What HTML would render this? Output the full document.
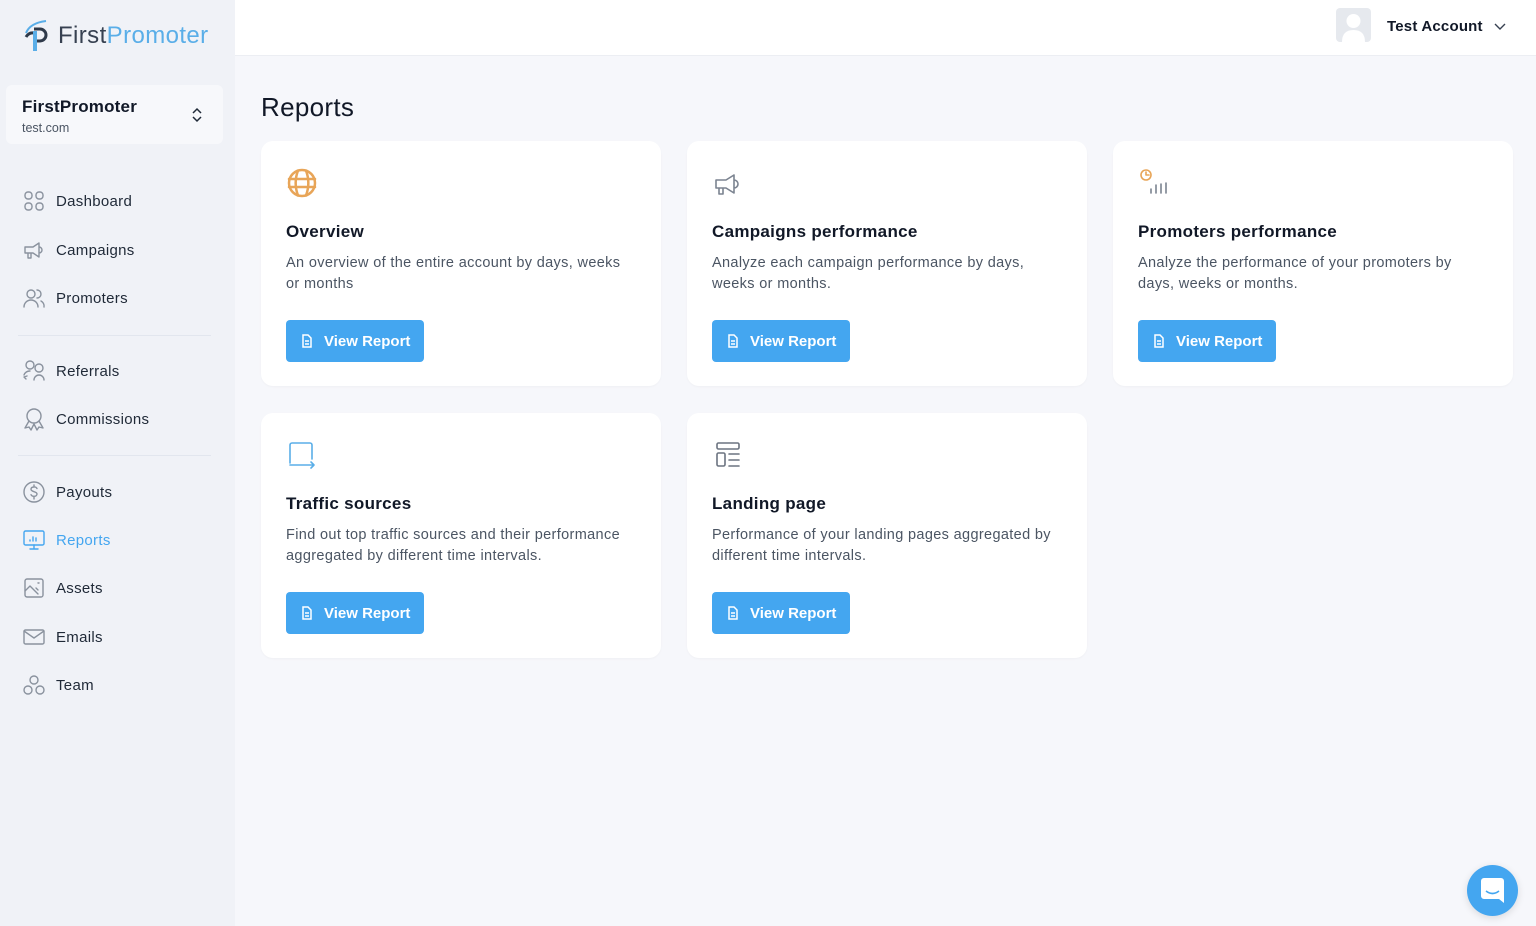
<!DOCTYPE html>
<html><head><meta charset="utf-8"><style>
*{box-sizing:border-box;margin:0;padding:0}
body{width:1536px;height:926px;overflow:hidden;font-family:"Liberation Sans",sans-serif;background:#f6f7fb;position:relative;color:#111827}
.side{position:absolute;left:0;top:0;width:235px;height:926px;background:#f0f2f7}
.logo{position:absolute;left:22px;top:19px;display:flex;align-items:center}
.logo span{font-size:24px;letter-spacing:.4px}
.acct{position:absolute;left:6px;top:85px;width:217px;height:59px;background:#f7f8fb;border-radius:6px}
.acct b{position:absolute;left:16px;top:12px;font-size:17px;letter-spacing:.2px}
.acct i{position:absolute;left:16px;top:36px;font-size:12.5px;font-style:normal;color:#4b5563}
.nav{position:absolute;left:22px;display:flex;align-items:center;font-size:15px;color:#1f2937;letter-spacing:.3px}
.nav svg{width:24px;height:24px;margin-right:10px;fill:none;stroke:#8a929e;stroke-width:1.4;stroke-linecap:round;stroke-linejoin:round}
.sep{position:absolute;left:18px;width:193px;height:1px;background:#e2e6ee}
.top{position:absolute;left:235px;top:0;right:0;height:56px;background:#fff;border-bottom:1px solid #eceef3}
h1{position:absolute;left:261px;top:92px;font-size:26px;font-weight:normal;color:#111827;letter-spacing:.3px}
.card{position:absolute;width:400px;height:245px;background:#fff;border-radius:12px;box-shadow:0 1px 2px rgba(0,0,0,.03)}
.card svg.ic{position:absolute;left:25px;top:26px;width:32px;height:32px;fill:none;stroke-width:1.6;stroke-linecap:round;stroke-linejoin:round}
.card h3{position:absolute;left:25px;top:81px;font-size:17px;font-weight:bold;letter-spacing:.3px}
.card p{position:absolute;left:25px;top:112px;width:350px;font-size:14.5px;line-height:21px;color:#4b5563;letter-spacing:.35px}
.btn{position:absolute;left:25px;top:179px;width:138px;height:42px;background:#44a6f0;border-radius:4px;color:#fff;font-weight:bold;font-size:15px;display:flex;align-items:center;padding-left:14px}
.btn svg{width:14px;height:14px;margin-right:10px;fill:none;stroke:#fff;stroke-width:1.5}
</style></head><body>
<div class="side">
 <div class="logo">
  <svg width="32" height="34" viewBox="0 0 32 34"><path d="M4 14 Q8 4 24 2" stroke="#5aaee8" stroke-width="2" fill="none"/><path d="M12 10h6a6 6 0 0 1 0 12h-4" stroke="#2f3a4a" stroke-width="3" fill="none"/><path d="M4 18q3-5 8-4" stroke="#2f3a4a" stroke-width="3" fill="none"/><path d="M13 12v20" stroke="#5aaee8" stroke-width="4"/></svg>
  <span style="color:#374151;margin-left:4px">First</span><span style="color:#5aaee8">Promoter</span>
 </div>
 <div class="acct"><b>FirstPromoter</b><i>test.com</i>
  <svg style="position:absolute;left:185px;top:22px" width="12" height="16" viewBox="0 0 12 16" fill="none" stroke="#1f2937" stroke-width="1.5"><path d="M2 6l4-4 4 4M2 10l4 4 4-4"/></svg></div>
 <div class="nav" style="top:189px"><svg viewBox="0 0 24 24"><rect x="3" y="3" width="7" height="7" rx="3"/><rect x="14" y="3" width="7" height="7" rx="3"/><rect x="3" y="14" width="7" height="7" rx="3"/><rect x="14" y="14" width="7" height="7" rx="3"/></svg>Dashboard</div>
 <div class="nav" style="top:238px"><svg viewBox="0 0 24 24"><path d="M3 9h8l6-4v14l-6-4H3zM6 15v5h3v-5M17 9a3 3 0 0 1 0 6"/></svg>Campaigns</div>
 <div class="nav" style="top:286px"><svg viewBox="0 0 24 24"><circle cx="9" cy="8" r="4"/><path d="M2 21a7 7 0 0 1 14 0M15 4a4 4 0 0 1 0 8M19 15a6 6 0 0 1 3 6"/></svg>Promoters</div>
 <div class="sep" style="top:335px"></div>
 <div class="nav" style="top:359px"><svg viewBox="0 0 24 24"><circle cx="8" cy="6" r="4"/><circle cx="17" cy="9" r="4"/><path d="M12 21a5 5 0 0 1 10 0M2 16a6 6 0 0 1 6-4M4 20l-2-2 3-1"/></svg>Referrals</div>
 <div class="nav" style="top:407px"><svg viewBox="0 0 24 24"><circle cx="12" cy="9" r="7"/><path d="M7 14l-4 7 4-1 2 3 3-6 3 6 2-3 4 1-4-7"/></svg>Commissions</div>
 <div class="sep" style="top:455px"></div>
 <div class="nav" style="top:480px"><svg viewBox="0 0 24 24"><circle cx="12" cy="12" r="10"/><path d="M15 8.5a3 3 0 0 0-3-1.5c-2 0-3 1-3 2.3 0 3 6 1.7 6 4.7 0 1.300-1.2 2.3-3 2.3a3.2 3.2 0 0 1-3-1.6M12 5v2M12 17v2"/></svg>Payouts</div>
 <div class="nav" style="top:528px;color:#44a6f0"><svg viewBox="0 0 24 24" style="stroke:#44a6f0"><rect x="2" y="3" width="20" height="14" rx="1.5"/><path d="M8 21h8M12 17v4M8 12v1M11 9v4M14 10v3"/></svg>Reports</div>
 <div class="nav" style="top:576px"><svg viewBox="0 0 24 24"><rect x="3" y="3" width="18" height="18" rx="2"/><path d="M3 15l5-5 8 8M14 12l2 2M16 7h1"/></svg>Assets</div>
 <div class="nav" style="top:625px"><svg viewBox="0 0 24 24"><rect x="2" y="5" width="20" height="14" rx="1.5"/><path d="M2 6l10 7 10-7"/></svg>Emails</div>
 <div class="nav" style="top:673px"><svg viewBox="0 0 24 24"><circle cx="12" cy="7" r="4"/><circle cx="6" cy="17" r="4"/><circle cx="18" cy="17" r="4"/></svg>Team</div>
</div>
<div class="top">
 <svg style="position:absolute;left:1101px;top:8px" width="35" height="34" viewBox="0 0 35 34"><rect width="35" height="34" rx="4" fill="#e6e9ee"/><circle cx="17.5" cy="13" r="7" fill="#fff"/><path d="M6 34q0-12 11.5-12T29 34z" fill="#fff"/></svg>
 <div style="position:absolute;left:1152px;top:18px;font-size:15px;font-weight:bold;color:#111827;letter-spacing:.2px">Test Account</div>
 <svg style="position:absolute;left:1259px;top:21px" width="12" height="10" viewBox="0 0 12 10" fill="none" stroke="#374151" stroke-width="1.4"><path d="M1 3l5 5 5-5"/></svg>
</div>
<h1>Reports</h1>
<div class="card" style="left:261px;top:141px"><svg class="ic" viewBox="0 0 32 32" stroke="#e8a558"><circle cx="16" cy="16" r="13" stroke-width="2.5"/><path d="M3 12h26M3 20h26M12 3.5c-3 8-3 17 0 25M20 3.5c3 8 3 17 0 25" stroke-width="2.5"/></svg>
 <h3>Overview</h3><p>An overview of the entire account by days, weeks or months</p><div class="btn"><svg viewBox="0 0 14 14"><path d="M3 1h5l3 3v9H3zM5 7h4M5 10h4"/></svg>View Report</div></div>
<div class="card" style="left:687px;top:141px"><svg class="ic" viewBox="0 0 32 32" stroke="#7b8390"><path d="M4 13h10l8-5v18l-8-5H4zM7 21v6h4v-6M22 13a4 4 0 0 1 0 8"/></svg>
 <h3>Campaigns performance</h3><p>Analyze each campaign performance by days, weeks or months.</p><div class="btn"><svg viewBox="0 0 14 14"><path d="M3 1h5l3 3v9H3zM5 7h4M5 10h4"/></svg>View Report</div></div>
<div class="card" style="left:1113px;top:141px"><svg class="ic" viewBox="0 0 32 32" stroke="#7b8390"><circle cx="8" cy="8" r="5" stroke="#e8a558"/><path d="M8 5v3h3" stroke="#e8a558"/><path d="M13 26v-4M18 26v-8M23 26v-9M28 26v-10"/></svg>
 <h3>Promoters performance</h3><p>Analyze the performance of your promoters by days, weeks or months.</p><div class="btn"><svg viewBox="0 0 14 14"><path d="M3 1h5l3 3v9H3zM5 7h4M5 10h4"/></svg>View Report</div></div>
<div class="card" style="left:261px;top:413px"><svg class="ic" viewBox="0 0 32 32" stroke="#5aaee8"><path d="M4 24V6a2 2 0 0 1 2-2h18a2 2 0 0 1 2 2v14M4 26h24M25 23l3 3-3 3"/></svg>
 <h3>Traffic sources</h3><p>Find out top traffic sources and their performance aggregated by different time intervals.</p><div class="btn"><svg viewBox="0 0 14 14"><path d="M3 1h5l3 3v9H3zM5 7h4M5 10h4"/></svg>View Report</div></div>
<div class="card" style="left:687px;top:413px"><svg class="ic" viewBox="0 0 32 32" stroke="#6b7380"><rect x="5" y="4" width="22" height="6" rx="1.5"/><rect x="5" y="14" width="8" height="13" rx="1.5"/><path d="M17 15h10M17 21h10M17 27h10"/></svg>
 <h3>Landing page</h3><p>Performance of your landing pages aggregated by different time intervals.</p><div class="btn"><svg viewBox="0 0 14 14"><path d="M3 1h5l3 3v9H3zM5 7h4M5 10h4"/></svg>View Report</div></div>
<div style="position:absolute;left:1467px;top:865px;width:51px;height:51px;border-radius:50%;background:#44a6f0;box-shadow:0 2px 8px rgba(0,0,0,.12)">
 <svg style="position:absolute;left:14px;top:13px" width="23" height="26" viewBox="0 0 23 26"><path d="M3 0h17a3 3 0 0 1 3 3v22l-5-4H3a3 3 0 0 1-3-3V3a3 3 0 0 1 3-3z" fill="#fff"/><path d="M5 13q6.5 5 13 0" stroke="#44a6f0" stroke-width="1.6" fill="none"/></svg></div>
</body></html>
